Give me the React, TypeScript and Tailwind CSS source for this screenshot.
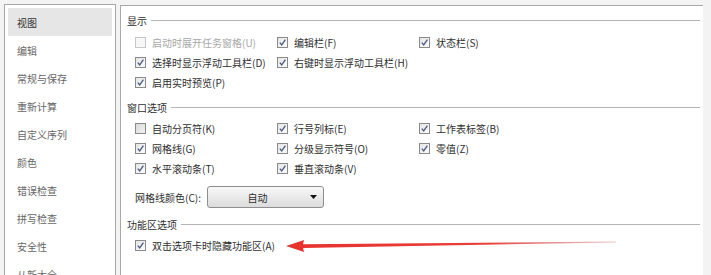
import React from "react";

const font = { fontFamily: '"Noto Sans CJK SC", "Noto Sans", sans-serif' };

function Box({ checked, disabled }: { checked?: boolean; disabled?: boolean }) {
  return (
    <span
      className={
        "relative inline-flex h-[11px] w-[11px] shrink-0 items-center justify-center border " +
        (disabled
          ? "border-[#c8c8c8] bg-[#f7f7f7]"
          : checked
          ? "border-[#8a8a8a] bg-gradient-to-br from-[#e6e6e6] to-[#fbfbfb]"
          : "border-[#8a8a8a] bg-gradient-to-br from-[#d9d9d9] to-[#f2f2f2]")
      }
    >
      {checked && (
        <svg width="9" height="9" viewBox="0 0 9 9">
          <path d="M1.8 4.6 L3.7 6.9 L7.4 1.6" fill="none" stroke="#4a5a84" strokeWidth="1.3" />
        </svg>
      )}
    </span>
  );
}

function Opt({ label, checked, disabled }: { label: string; checked?: boolean; disabled?: boolean }) {
  return (
    <div className="flex h-[20px] w-[142px] items-center gap-[6px] whitespace-nowrap">
      <Box checked={checked} disabled={disabled} />
      <span className={disabled ? "text-[#a8a8a8]" : "text-[#2e2e2e]"}>{label}</span>
    </div>
  );
}

function Heading({ title }: { title: string }) {
  return (
    <div className="flex h-[16px] items-center pr-[3px]">
      <span className="text-[#2e2e2e]">{title}</span>
      <div className="ml-[4px] h-px flex-1 bg-[#b4b4b4]" />
    </div>
  );
}

const nav = ["视图", "编辑", "常规与保存", "重新计算", "自定义序列", "颜色", "错误检查", "拼写检查", "安全性", "从新大全"];

export default function App() {
  return (
    <div className="relative h-[275px] w-[711px] overflow-hidden bg-[#f3f3f3] text-[10px]" style={font}>
      <div className="flex h-full gap-[4px] pl-[4px] pt-[4px]">
        {/* left nav */}
        <div className="h-[300px] w-[112px] border border-[#a8a8a8] bg-white p-[3px]">
          {nav.map((n, i) => (
            <div
              key={n}
              className={
                "flex h-[28px] items-center pl-[9px] " + (i === 0 ? "bg-[#e6e6e6] text-[#333]" : "text-[#666]")
              }
            >
              {n}
            </div>
          ))}
        </div>
        {/* right panel */}
        <div className="mt-[1px] h-[300px] w-[583px] border-l border-t border-[#a8a8a8] bg-white pl-[6px] pt-[6px]">
          <Heading title="显示" />
          <div className="mt-[4px] pl-[8px]">
            <div className="flex">
              <Opt label="启动时展开任务窗格(U)" disabled />
              <Opt label="编辑栏(F)" checked />
              <Opt label="状态栏(S)" checked />
            </div>
            <div className="flex">
              <Opt label="选择时显示浮动工具栏(D)" checked />
              <Opt label="右键时显示浮动工具栏(H)" checked />
            </div>
            <div className="flex">
              <Opt label="启用实时预览(P)" checked />
            </div>
          </div>
          <div className="mt-[7px]">
            <Heading title="窗口选项" />
          </div>
          <div className="mt-[3px] pl-[8px]">
            <div className="flex">
              <Opt label="自动分页符(K)" />
              <Opt label="行号列标(E)" checked />
              <Opt label="工作表标签(B)" checked />
            </div>
            <div className="flex">
              <Opt label="网格线(G)" checked />
              <Opt label="分级显示符号(O)" checked />
              <Opt label="零值(Z)" checked />
            </div>
            <div className="flex">
              <Opt label="水平滚动条(T)" checked />
              <Opt label="垂直滚动条(V)" checked />
            </div>
            <div className="mt-[8px] flex h-[22px] items-center gap-[4px]">
              <span className="w-[68px] whitespace-nowrap text-[#2e2e2e]">网格线颜色(C):</span>
              <div className="flex h-[22px] w-[117px] items-center rounded-[3px] border border-[#8e8e8e] bg-gradient-to-b from-[#f8f8f8] to-[#dcdcdc]">
                <span className="flex-1 text-center text-[#2e2e2e]">自动</span>
                <svg width="16" height="6" viewBox="0 0 16 6">
                  <path d="M3 1 L10 1 L6.5 5 Z" fill="#111" />
                </svg>
              </div>
            </div>
          </div>
          <div className="mt-[8px]">
            <Heading title="功能区选项" />
          </div>
          <div className="mt-[3px] pl-[8px]">
            <Opt label="双击选项卡时隐藏功能区(A)" checked />
          </div>
        </div>
      </div>
      {/* red arrow overlay */}
      <svg className="absolute left-0 top-0" width="711" height="275" viewBox="0 0 711 275">
        <defs>
          <linearGradient id="shaft" x1="300" y1="0" x2="616" y2="0" gradientUnits="userSpaceOnUse">
            <stop offset="0" stopColor="#e8322e" />
            <stop offset="0.6" stopColor="#e8403c" />
            <stop offset="1" stopColor="#d8a0a8" stopOpacity="0.6" />
          </linearGradient>
        </defs>
        <polygon points="286,246 304,240 303,244.2 616,241.6 616,242.4 303,248 304,252" fill="url(#shaft)" />
      </svg>
    </div>
  );
}
